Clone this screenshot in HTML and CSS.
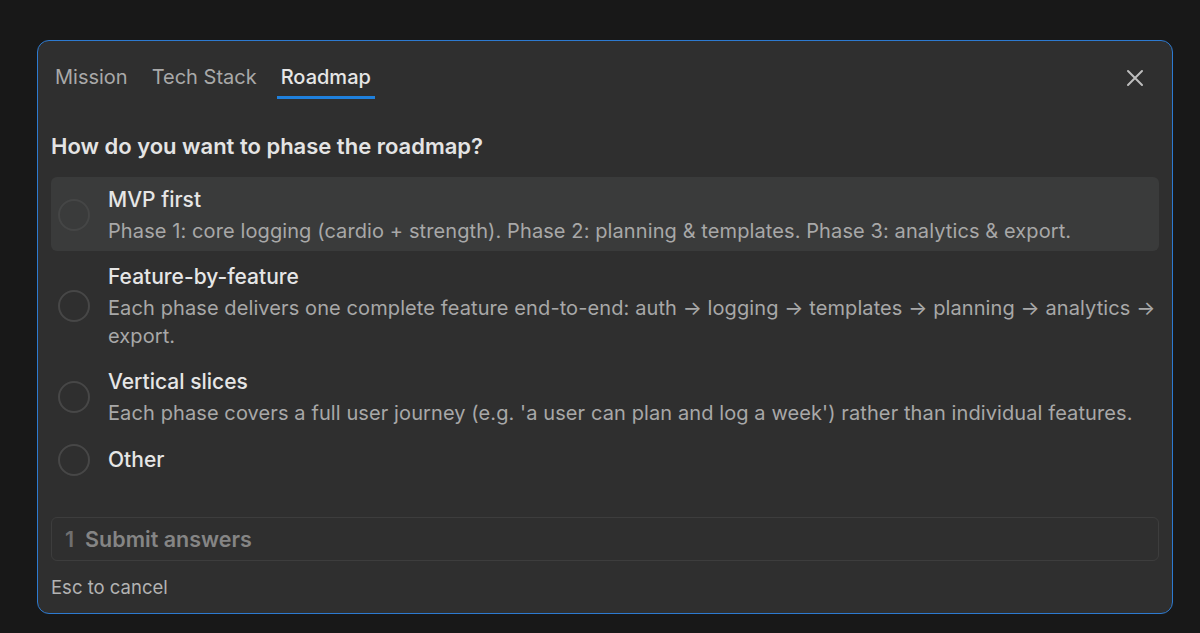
FILE: index.html
```html
<!DOCTYPE html>
<html lang="en">
  <head>
    <meta charset="UTF-8" />
    <title>Roadmap</title>
    <link rel="stylesheet" href="styles.css">
  </head>
  <body>
    <div class="dialog">
      <div class="tabs-row">
        <div class="tabs">
          <span class="tab">Mission</span>
          <span class="tab">Tech Stack</span>
          <span class="tab active">Roadmap</span>
        </div>
        <button class="close" aria-label="Close">
          <svg width="18" height="18" viewBox="0 0 18 18">
            <path d="M2 2 L16 16 M16 2 L2 16" stroke="#bdbdbd" stroke-width="2" stroke-linecap="round" />
          </svg>
        </button>
      </div>

      <h2 class="question">How do you want to phase the roadmap?</h2>

      <div class="options">
        <div class="option selected">
          <span class="radio"></span>
          <div class="option-text">
            <div class="option-title">MVP first</div>
            <div class="option-desc">Phase 1: core logging (cardio + strength). Phase 2: planning &amp; templates. Phase 3: analytics &amp; export.</div>
          </div>
        </div>
        <div class="option">
          <span class="radio"></span>
          <div class="option-text">
            <div class="option-title">Feature-by-feature</div>
            <div class="option-desc">Each phase delivers one complete feature end-to-end: auth → logging → templates → planning → analytics → export.</div>
          </div>
        </div>
        <div class="option">
          <span class="radio"></span>
          <div class="option-text">
            <div class="option-title">Vertical slices</div>
            <div class="option-desc">Each phase covers a full user journey (e.g. 'a user can plan and log a week') rather than individual features.</div>
          </div>
        </div>
        <div class="option">
          <span class="radio"></span>
          <div class="option-text">
            <div class="option-title">Other</div>
          </div>
        </div>
      </div>

      <div class="submit"><span class="submit-num">1</span>Submit answers</div>
      <div class="hint">Esc to cancel</div>
    </div>
  </body>
</html>
```

FILE: styles.css
```css
body {
  margin: 0;
  padding: 40px 27px 19px 37px;
  background-color: #181818;
  font-family: Inter, "Noto Sans", sans-serif;
  color: #e2e2e2;
}

.dialog {
  height: 572px;
  background-color: #2f2f2f;
  border: 1px solid #2d7ad0;
  border-radius: 12px;
  padding: 0 13px 0 13px;
}

.tabs-row {
  display: flex;
  align-items: center;
  justify-content: space-between;
  padding-top: 22px;
}

.tabs {
  display: flex;
  gap: 16px;
}

.tab {
  font-size: 20px;
  line-height: 29px;
  padding: 0 4px 4px;
  color: #a9a9a9;
  border-bottom: 3px solid transparent;
}

.tab.active {
  color: #e6e6e6;
  font-weight: 500;
  border-bottom-color: #1f80dc;
}

.close {
  background: none;
  border: none;
  padding: 0;
  margin: 0 15px 6px 0;
  width: 18px;
  height: 18px;
  cursor: pointer;
}

.question {
  margin: 33px 0 17px;
  font-size: 22px;
  line-height: 28px;
  font-weight: 600;
  color: #e4e4e4;
}

.options {
  display: flex;
  flex-direction: column;
  gap: 3px;
}

.option {
  display: flex;
  align-items: center;
  gap: 18px;
  padding: 8px 0 6px 7px;
  border-radius: 6px;
}

.option.selected {
  background-color: #3a3b3b;
}

.radio {
  flex: none;
  width: 28px;
  height: 28px;
  border: 2px solid #474747;
  border-radius: 50%;
}

.option.selected .radio {
  border-color: #454646;
}

.option-title {
  font-size: 21px;
  line-height: 30px;
  font-weight: 500;
  color: #e6e6e6;
}

.option-desc {
  margin-top: 2px;
  font-size: 20px;
  line-height: 28px;
  letter-spacing: 0.1px;
  color: #a8a8a8;
}

.submit {
  margin-top: 35px;
  height: 42px;
  display: flex;
  align-items: center;
  padding: 0 13px;
  border: 1px solid #3d3d3d;
  border-radius: 6px;
  font-size: 21.5px;
  font-weight: 600;
  color: #858585;
}

.submit-num {
  margin-right: 11px;
  color: #6f6f6f;
}

.hint {
  margin-top: 15px;
  font-size: 18.5px;
  line-height: 22px;
  color: #b3b3b3;
}
```
